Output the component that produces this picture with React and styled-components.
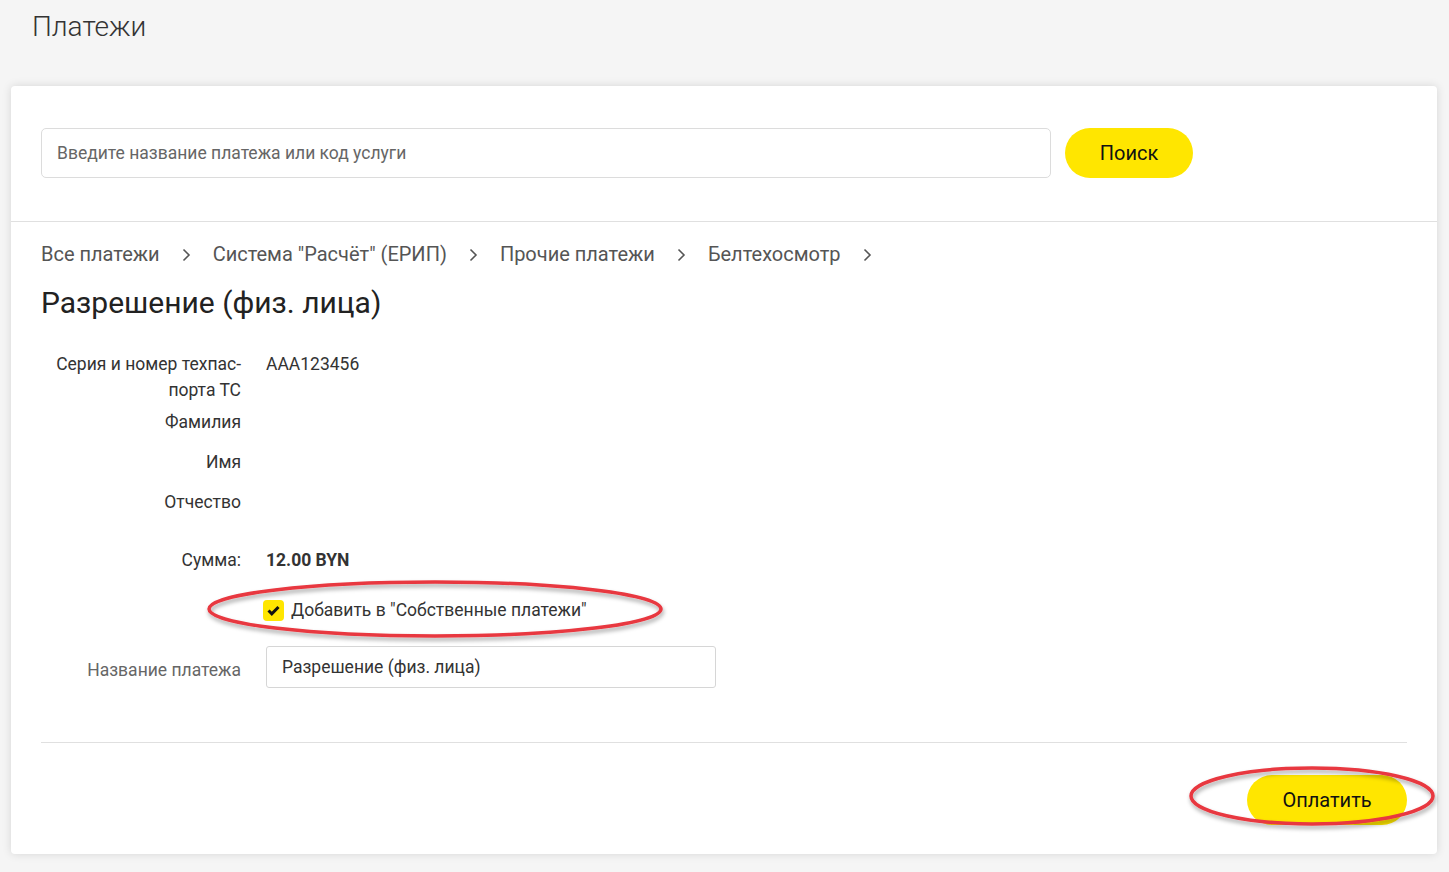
import React from 'react';
import styled, { createGlobalStyle } from 'styled-components';

const GlobalStyle = createGlobalStyle`
    html, body {
        margin: 0;
        padding: 0;
        background: #f5f5f5;
        font-family: Roboto, "Liberation Sans", sans-serif;
        color: #333;
    }
    * {
        box-sizing: border-box;
    }
`;

const Ring = ({ width, height, id }) => (
    <RingSvg width={width} height={height} viewBox={`0 0 ${width} ${height}`}>
        <defs>
            <filter id={id} x="-10%" y="-30%" width="120%" height="160%">
                <feDropShadow dx="1" dy="3" stdDeviation="2" floodColor="#000" floodOpacity="0.35" />
            </filter>
        </defs>
        <ellipse
            cx={width / 2}
            cy={height / 2}
            rx={width / 2 - 4}
            ry={height / 2 - 5}
            fill="none"
            stroke="#e8373f"
            strokeWidth="3.5"
            filter={`url(#${id})`}
        />
    </RingSvg>
);

const Chevron = () => (
    <ChevronSvg width="10" height="14" viewBox="0 0 10 14">
        <path d="M2.5 1.5 L8 7 L2.5 12.5" fill="none" stroke="#555" strokeWidth="1.6" />
    </ChevronSvg>
);

const crumbs = ['Все платежи', 'Система "Расчёт" (ЕРИП)', 'Прочие платежи', 'Белтехосмотр'];

export default function App() {
    return (
        <Page>
            <GlobalStyle />
            <PageTitle>Платежи</PageTitle>
            <Card>
                <SearchBar>
                    <SearchInput placeholder="Введите название платежа или код услуги" />
                    <YellowButton $width={128}>Поиск</YellowButton>
                </SearchBar>
                <Body>
                    <Crumbs>
                        {crumbs.map((c) => (
                            <Crumb key={c}>
                                {c}
                                <Chevron />
                            </Crumb>
                        ))}
                    </Crumbs>
                    <ServiceTitle>Разрешение (физ. лица)</ServiceTitle>
                    <Form>
                        <FieldRow>
                            <Label>
                                Серия и номер техпас-
                                <br />
                                порта ТС
                            </Label>
                            <Value>AAA123456</Value>
                        </FieldRow>
                        <FieldRow>
                            <Label>Фамилия</Label>
                            <Value />
                        </FieldRow>
                        <FieldRow>
                            <Label>Имя</Label>
                            <Value />
                        </FieldRow>
                        <FieldRow>
                            <Label>Отчество</Label>
                            <Value />
                        </FieldRow>
                        <SumRow>
                            <Label>Сумма:</Label>
                            <Value $bold>12.00 BYN</Value>
                        </SumRow>
                        <CheckRow>
                            <Label />
                            <CheckLabel>
                                <CheckBox>
                                    <svg width="13" height="11" viewBox="0 0 13 11">
                                        <path d="M1.5 5.5 L4.8 8.8 L11.5 2" fill="none" stroke="#111" strokeWidth="3" />
                                    </svg>
                                </CheckBox>
                                Добавить в "Собственные платежи"
                            </CheckLabel>
                            <RingSpot $left={164} $top={-20}>
                                <Ring id="ringA" width={460} height={64} />
                            </RingSpot>
                        </CheckRow>
                        <NameRow>
                            <Label $muted>Название платежа</Label>
                            <NameInput defaultValue="Разрешение (физ. лица)" />
                        </NameRow>
                    </Form>
                    <Footer>
                        <PayWrap>
                            <YellowButton $width={160}>Оплатить</YellowButton>
                            <RingSpot $left={-60} $top={-12}>
                                <Ring id="ringB" width={250} height={66} />
                            </RingSpot>
                        </PayWrap>
                    </Footer>
                </Body>
            </Card>
        </Page>
    );
}

const Page = styled.div`
    min-height: 872px;
    padding: 0 12px 18px 11px;
`;

const PageTitle = styled.h1`
    margin: 0;
    padding: 8px 0 0 21px;
    height: 86px;
    font-size: 28px;
    font-weight: 300;
    color: #333;
    line-height: 38px;
`;

const Card = styled.div`
    background: #fff;
    border-radius: 4px;
    box-shadow: 0 0 10px rgba(0, 0, 0, 0.13);
`;

const SearchBar = styled.div`
    display: flex;
    gap: 14px;
    padding: 42px 30px 43px;
    border-bottom: 1px solid #e0e0e0;
`;

const SearchInput = styled.input`
    width: 1010px;
    height: 50px;
    border: 1px solid #dcdcdc;
    border-radius: 5px;
    padding: 0 15px;
    font-family: Roboto, sans-serif;
    font-size: 17.5px;
    color: #333;
    outline: none;

    &::placeholder {
        color: #666;
    }
`;

const YellowButton = styled.button`
    width: ${(p) => p.$width}px;
    height: 50px;
    border: none;
    border-radius: 25px;
    background: #ffe600;
    font-family: Roboto, sans-serif;
    font-size: 20px;
    color: #111;
    cursor: pointer;
`;

const Body = styled.div`
    padding: 20px 30px 29px;
`;

const Crumbs = styled.div`
    display: flex;
    gap: 22px;
    font-size: 20px;
    line-height: 24px;
    color: #555;
`;

const Crumb = styled.span`
    display: flex;
    align-items: center;
    gap: 21px;
`;

const ChevronSvg = styled.svg`
    display: block;
    margin-top: 1px;
`;

const ServiceTitle = styled.h2`
    margin: 18px 0 0;
    font-size: 30px;
    font-weight: 400;
    line-height: 38px;
    color: #222;
`;

const Form = styled.div`
    margin-top: 29px;
    font-size: 17.5px;
    line-height: 26px;
`;

const FieldRow = styled.div`
    display: grid;
    grid-template-columns: 200px 1fr;
    column-gap: 25px;
    min-height: 40px;
    padding-bottom: 6px;
`;

const Label = styled.div`
    text-align: right;
    color: ${(p) => (p.$muted ? '#666' : '#333')};
`;

const Value = styled.div`
    color: #333;
    font-weight: ${(p) => (p.$bold ? 700 : 400)};
`;

const SumRow = styled(FieldRow)`
    margin-top: 18px;
    min-height: 0;
    padding-bottom: 0;
`;

const CheckRow = styled(FieldRow)`
    position: relative;
    margin-top: 24px;
    min-height: 0;
    padding-bottom: 0;
`;

const CheckLabel = styled.label`
    display: flex;
    align-items: center;
    gap: 7px;
    margin-left: -3px;
    color: #333;
`;

const CheckBox = styled.span`
    display: flex;
    flex: none;
    align-items: center;
    justify-content: center;
    width: 21px;
    height: 21px;
    border-radius: 4px;
    background: #ffe600;
`;

const RingSpot = styled.div`
    position: absolute;
    left: ${(p) => p.$left}px;
    top: ${(p) => p.$top}px;
    pointer-events: none;
`;

const RingSvg = styled.svg`
    display: block;
    overflow: visible;
`;

const NameRow = styled(FieldRow)`
    margin-top: 23px;
    min-height: 0;
    padding-bottom: 0;
    align-items: center;

    ${Label} {
        padding-top: 6px;
    }
`;

const NameInput = styled.input`
    width: 450px;
    height: 42px;
    border: 1px solid #d6d6d6;
    border-radius: 3px;
    padding: 0 15px;
    font-family: Roboto, sans-serif;
    font-size: 17.5px;
    color: #333;
    outline: none;
`;

const Footer = styled.div`
    margin-top: 54px;
    padding-top: 32px;
    border-top: 1px solid #e0e0e0;
    display: flex;
    justify-content: flex-end;
`;

const PayWrap = styled.div`
    position: relative;
`;
